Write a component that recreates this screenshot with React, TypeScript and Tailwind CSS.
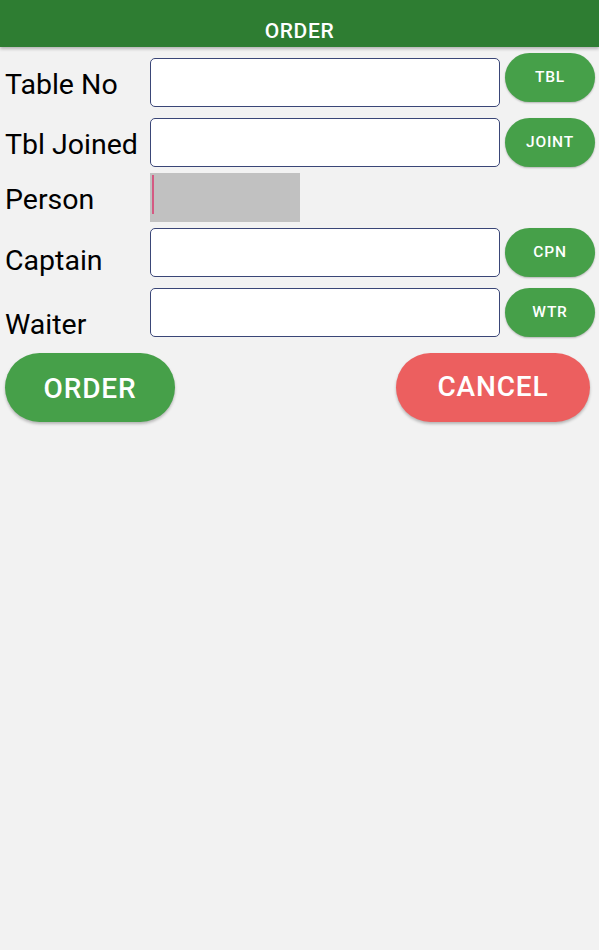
import React from "react";

const PillButton: React.FC<{ text: string; className?: string }> = ({
  text,
  className = "",
}) => (
  <button
    className={`h-[49px] w-[90px] shrink-0 rounded-full bg-[#46a049] text-[15.5px] font-medium tracking-[0.05em] text-white shadow-[0_1px_2px_rgba(0,0,0,0.25)] ${className}`}
  >
    {text}
  </button>
);

const App: React.FC = () => {
  return (
    <div
      className="min-h-screen w-[599px] bg-[#f2f2f2]"
      style={{ fontFamily: "Roboto, 'Liberation Sans', sans-serif" }}
    >
      <div className="h-[47px] bg-[#2e7d32] pt-[19px] text-center text-[21px] font-medium leading-[24px] tracking-[0.03em] text-white shadow-[0_2px_3px_rgba(0,0,0,0.25)]">
        ORDER
      </div>

      {/* Table No */}
      <div className="mt-[6px] flex items-start pl-[5px]">
        <div className="mt-[20px] w-[145px] text-[28.5px] leading-[24px] text-black">
          Table No
        </div>
        <input className="mt-[5px] h-[49px] w-[350px] rounded-[5px] border border-[#3a4677] bg-white outline-none" />
        <PillButton text="TBL" className="ml-[5px]" />
      </div>

      {/* Tbl Joined */}
      <div className="mt-[11px] flex items-start pl-[5px]">
        <div className="mt-[15px] w-[145px] whitespace-nowrap text-[28.5px] leading-[24px] text-black">
          Tbl Joined
        </div>
        <input className="h-[49px] w-[350px] rounded-[5px] border border-[#3a4677] bg-white outline-none" />
        <PillButton text="JOINT" className="ml-[5px]" />
      </div>

      {/* Person */}
      <div className="mt-[6px] flex items-start pl-[5px]">
        <div className="mt-[15px] w-[145px] text-[28.5px] leading-[24px] text-black">
          Person
        </div>
        <div className="flex h-[49px] w-[150px] items-start bg-[#c1c1c1] pl-[2px] pt-[2px]">
          <div className="h-[39px] w-[2px] bg-[#d45a82]" />
        </div>
      </div>

      {/* Captain */}
      <div className="mt-[6px] flex items-start pl-[5px]">
        <div className="mt-[21px] w-[145px] text-[28.5px] leading-[24px] text-black">
          Captain
        </div>
        <input className="h-[49px] w-[350px] rounded-[5px] border border-[#3a4677] bg-white outline-none" />
        <PillButton text="CPN" className="ml-[5px]" />
      </div>

      {/* Waiter */}
      <div className="mt-[11px] flex items-start pl-[5px]">
        <div className="mt-[25px] w-[145px] text-[28.5px] leading-[24px] text-black">
          Waiter
        </div>
        <input className="h-[49px] w-[350px] rounded-[5px] border border-[#3a4677] bg-white outline-none" />
        <PillButton text="WTR" className="ml-[5px]" />
      </div>

      <div className="mt-[16px] flex items-start justify-between pl-[5px] pr-[9px]">
        <button className="h-[69px] w-[170px] rounded-full bg-[#46a049] pt-[2px] text-[28px] font-medium tracking-[0.03em] text-white shadow-[0_2px_3px_rgba(0,0,0,0.25)]">
          ORDER
        </button>
        <button className="h-[69px] w-[194px] rounded-full bg-[#ec5f5f] pb-[2px] text-[28px] font-medium tracking-[0.03em] text-white shadow-[0_2px_3px_rgba(0,0,0,0.25)]">
          CANCEL
        </button>
      </div>
    </div>
  );
};

export default App;
